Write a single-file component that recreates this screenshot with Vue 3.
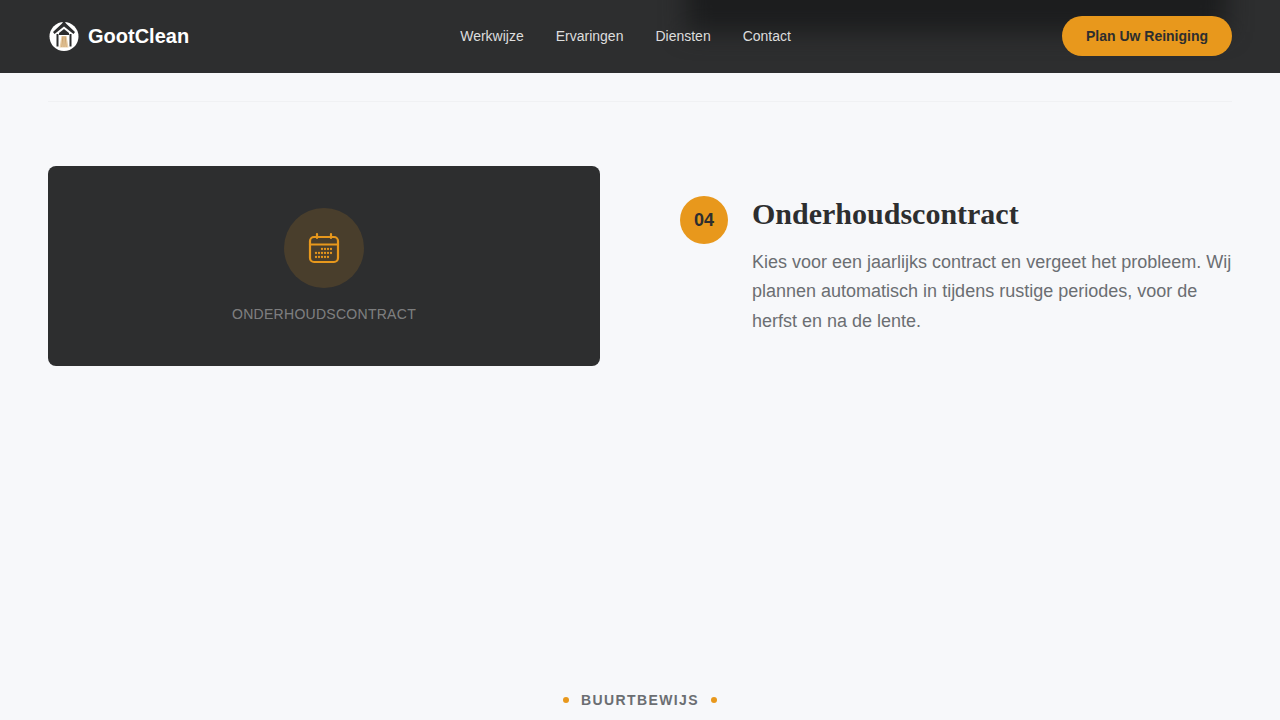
<template>
  <div class="page">
    <header class="site-header">
      <div class="header-glow"></div>
      <a class="brand">
        <svg class="brand-logo" viewBox="0 0 32 32">
          <circle cx="16" cy="16.5" r="14.5" fill="#fff" />
          <path d="M16 0.5 L18 3.5 L27 12 L25.5 14 L16 6.5 L6.5 14 L5 12 L14 3.5 Z" fill="#2d2e2f" />
          <path d="M11 13 L16 9 L21 13 V15 H11 Z" fill="#2d2e2f" />
          <path d="M8.5 14 H10.5 V26.5 H8.5 Z M21.5 14 H23.5 V26.5 H21.5 Z" fill="#2d2e2f" />
          <path d="M13.5 16 H18.5 L20.5 27.5 H11.5 Z" fill="#e9cfa8" />
          <path d="M14.8 16.5 L13.8 27 M16 16.5 V27 M17.2 16.5 L18.2 27" stroke="#c2945a" stroke-width="0.7" />
        </svg>
        <span class="brand-name">GootClean</span>
      </a>
      <nav class="nav">
        <a v-for="item in navItems" :key="item">{{ item }}</a>
      </nav>
      <button class="cta">Plan Uw Reiniging</button>
    </header>

    <main class="content">
      <div class="divider"></div>
      <section class="step">
        <div class="step-visual">
          <div class="icon-circle">
            <svg viewBox="0 0 32 32" class="calendar" fill="none" stroke="#e8981c" stroke-width="2.2" stroke-linecap="round" stroke-linejoin="round">
              <rect x="2" y="5" width="28" height="25" rx="4" />
              <path d="M2 12.5 H30" />
              <path d="M9 2 V6 M23 2 V6" />
              <g fill="#e8981c" stroke="none">
                <circle v-for="d in calendarDots" :key="d.join()" :cx="d[0]" :cy="d[1]" r="1.15" />
              </g>
            </svg>
          </div>
          <span class="visual-label">ONDERHOUDSCONTRACT</span>
        </div>
        <div class="step-body">
          <div class="step-number">04</div>
          <div class="step-text">
            <h3>Onderhoudscontract</h3>
            <p>Kies voor een jaarlijks contract en vergeet het probleem. Wij plannen automatisch in tijdens rustige periodes, voor de herfst en na de lente.</p>
          </div>
        </div>
      </section>
      <div class="eyebrow">
        <span class="dot"></span>
        <span>BUURTBEWIJS</span>
        <span class="dot"></span>
      </div>
    </main>
  </div>
</template>

<script setup>
const navItems = ['Werkwijze', 'Ervaringen', 'Diensten', 'Contact']

// three rows of the date grid, the top row starts further right
const calendarDots = [
  [14, 17], [17, 17], [20, 17], [23, 17],
  [8, 21], [11, 21], [14, 21], [17, 21], [20, 21], [23, 21],
  [8, 25], [11, 25], [14, 25], [17, 25], [20, 25],
]
</script>

<style scoped>
.page {
  height: 720px;
  overflow: hidden;
  background: #f7f8fa;
  font-family: "Liberation Sans", Arial, sans-serif;
}
.site-header {
  position: relative;
  height: 72px;
  padding: 0 48px;
  display: flex;
  justify-content: space-between;
  align-items: center;
  background: #2d2e2f;
  border-bottom: 1px solid #2d2e2f;
  overflow: hidden;
}
.header-glow {
  position: absolute;
  left: 686px;
  top: -40px;
  width: 540px;
  height: 72px;
  background: #1c1d1e;
  filter: blur(12px);
}
.brand {
  position: relative;
  display: flex;
  align-items: center;
  gap: 8px;
}
.brand-logo {
  width: 32px;
  height: 32px;
}
.brand-name {
  font-size: 20px;
  font-weight: 700;
  color: #fff;
}
.nav {
  position: relative;
  display: flex;
  gap: 32px;
}
.nav a {
  font-size: 14px;
  color: rgba(255, 255, 255, 0.85);
}
.cta {
  position: relative;
  width: 170px;
  height: 40px;
  border: 0;
  border-radius: 20px;
  background: #e8981c;
  color: #2d2e2f;
  font-family: inherit;
  font-size: 14px;
  font-weight: 700;
}
.content {
  padding: 28px 48px 0;
}
.divider {
  height: 1px;
  background: #f0f1f3;
}
.step {
  margin-top: 64px;
  display: grid;
  grid-template-columns: 1fr 1fr;
  gap: 80px;
  height: 200px;
}
.step-visual {
  height: 200px;
  border-radius: 8px;
  background: #2d2e2f;
  display: flex;
  flex-direction: column;
  align-items: center;
  padding-top: 42px;
  box-sizing: border-box;
  gap: 18px;
}
.icon-circle {
  width: 80px;
  height: 80px;
  border-radius: 50%;
  background: rgba(232, 152, 28, 0.15);
  display: flex;
  align-items: center;
  justify-content: center;
}
.calendar {
  width: 32px;
  height: 32px;
}
.visual-label {
  font-size: 14px;
  letter-spacing: 0.28px;
  color: rgba(255, 255, 255, 0.4);
}
.step-body {
  padding-top: 30px;
  display: flex;
  gap: 24px;
}
.step-number {
  flex: none;
  width: 48px;
  height: 48px;
  border-radius: 50%;
  background: #e8981c;
  color: #2d2e2f;
  font-size: 18px;
  font-weight: 700;
  display: flex;
  align-items: center;
  justify-content: center;
}
.step-text h3 {
  margin: 0 0 15.6px;
  font-family: "Liberation Serif", "Times New Roman", serif;
  font-size: 30px;
  line-height: 36px;
  font-weight: 700;
  color: #2d2e2f;
}
.step-text p {
  margin: 0;
  font-size: 18px;
  line-height: 29.7px;
  color: #6b6e72;
}
.eyebrow {
  margin-top: 326px;
  display: flex;
  justify-content: center;
  align-items: center;
  gap: 12px;
  font-size: 14px;
  font-weight: 700;
  letter-spacing: 1.4px;
  color: #6b6e72;
}
.dot {
  width: 6px;
  height: 6px;
  border-radius: 50%;
  background: #e8981c;
}
</style>
